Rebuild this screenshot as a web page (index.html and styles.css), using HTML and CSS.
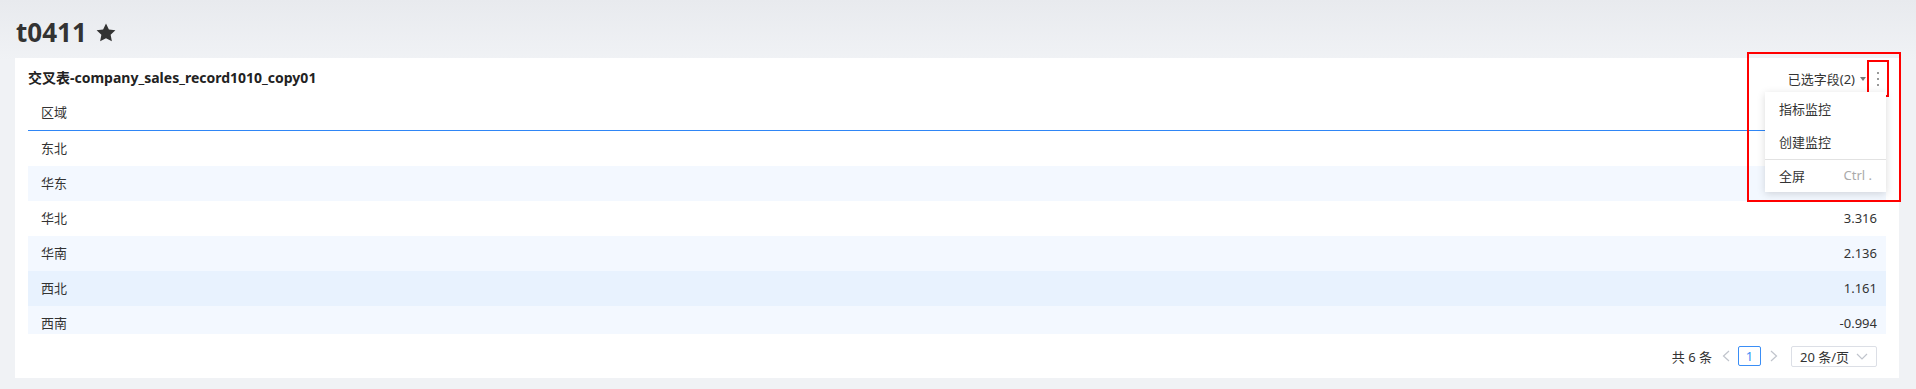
FILE: index.html
```html
<!DOCTYPE html>
<html lang="zh">
<head>
    <meta charset="UTF-8">
    <title>t0411</title>
    <meta name="viewport" content="width=device-width,initial-scale=1.0">
    <link rel="stylesheet" href="styles.css">
</head>
<body>
<div class="page">
    <h1 class="page-title">
        <span>t0411</span>
        <svg class="star" viewBox="0 0 24 23" width="20" height="19">
            <path d="M12 0.6l3.5 7.2 7.9 1-5.8 5.5 1.5 7.9L12 18.4l-7.1 3.8 1.5-7.9L0.6 8.8l7.9-1z" fill="#333"/>
        </svg>
    </h1>

    <div class="card">
        <div class="card-head">
            <div class="card-title">交叉表-company_sales_record1010_copy01</div>
            <div class="card-tools">
                <span class="fields">已选字段(2)<i class="caret"></i></span>
                <span class="more"><i></i><i></i><i></i></span>

                <!-- 更多操作菜单 -->
                <div class="menu">
                    <div class="menu-item">指标监控</div>
                    <div class="menu-item">创建监控</div>
                    <div class="menu-divider"></div>
                    <div class="menu-item menu-item--last">全屏<span class="menu-key">Ctrl .</span></div>
                </div>
                <div class="mark"></div>
            </div>
        </div>

        <div class="grid">
            <div class="grid-head">
                <span>区域</span>
            </div>
            <div class="grid-body">
                <!-- 前两行的数值被菜单遮住 -->
                <div class="grid-row"><span>东北</span></div>
                <div class="grid-row"><span>华东</span></div>
                <div class="grid-row"><span>华北</span><span>3.316</span></div>
                <div class="grid-row"><span>华南</span><span>2.136</span></div>
                <div class="grid-row grid-row--hover"><span>西北</span><span>1.161</span></div>
                <div class="grid-row"><span>西南</span><span>-0.994</span></div>
            </div>
        </div>

        <div class="pager">
            <span class="pager-total">共 6 条</span>
            <svg class="pager-arrow pager-prev" viewBox="0 0 8 12" width="8" height="12">
                <polyline points="7,1 1.5,6 7,11" fill="none" stroke="#c0c4cc" stroke-width="1.2"/>
            </svg>
            <span class="pager-num">1</span>
            <svg class="pager-arrow pager-next" viewBox="0 0 8 12" width="8" height="12">
                <polyline points="1,1 6.5,6 1,11" fill="none" stroke="#c0c4cc" stroke-width="1.2"/>
            </svg>
            <span class="pager-size">
                20 条/页
                <svg viewBox="0 0 12 7" width="12" height="7">
                    <polyline points="1,1 6,6 11,1" fill="none" stroke="#c0c4cc" stroke-width="1.2"/>
                </svg>
            </span>
        </div>
    </div>
</div>
</body>
</html>
```

FILE: styles.css
```css
html, body {
    margin: 0;
}

body {
    background: linear-gradient(#e8eaee, #f0f2f5 60px) #f0f2f5;
    font-family: "Noto Sans", "Noto Sans CJK SC", sans-serif;
    font-size: 13px;
    color: #333;
}

.page {
    padding: 0 17px 11px 15px;
}

/*页面标题*/
.page-title {
    margin: 0;
    padding: 14px 0 8px 1px;
    height: 36px;
    line-height: 36px;
    font-size: 26px;
    font-weight: 700;
    color: #333;
    display: flex;
    align-items: center;
    gap: 9px;
}

.star {
    display: block;
}

/*卡片*/
.card {
    background-color: #fff;
    height: 320px;
    box-sizing: border-box;
    padding: 0 13px;
    display: flex;
    flex-direction: column;
}

.card-head {
    height: 38px;
    flex: none;
    display: flex;
    justify-content: space-between;
    align-items: center;
}

.card-title {
    font-size: 14px;
    font-weight: 700;
    color: #222;
}

.card-tools {
    position: relative;
    display: flex;
    align-items: center;
    margin-right: -1px;
    margin-top: 3px;
}

.fields {
    display: flex;
    align-items: center;
    margin-top: -1px;
    color: #333;
}

.caret {
    width: 0;
    height: 0;
    border-left: 3.5px solid transparent;
    border-right: 3.5px solid transparent;
    border-top: 4px solid #777;
    margin: 1px 3px 0 5px;
}

.more {
    width: 18px;
    height: 33px;
    outline: 2px solid #f00;
    display: flex;
    flex-direction: column;
    align-items: center;
    justify-content: center;
    gap: 4px;
}

.more i {
    width: 2px;
    height: 2px;
    border-radius: 50%;
    background-color: #777;
}

/*下拉菜单*/
.menu {
    position: absolute;
    top: calc(100% - 3px);
    right: 1px;
    width: 121px;
    padding-top: 1px;
    background-color: #fff;
    box-shadow: 0 2px 8px rgba(0, 0, 0, .15);
    z-index: 2;
}

.menu-item {
    height: 33px;
    box-sizing: border-box;
    padding: 0 14px 2px;
    display: flex;
    align-items: center;
    justify-content: space-between;
    color: #333;
}

.menu-item--last {
    height: 32px;
}

.menu-key {
    color: #aaa;
}

.menu-divider {
    height: 1px;
    background-color: #e2e2e2;
}

/*标注框*/
.mark {
    position: absolute;
    right: -14px;
    top: -10px;
    width: 154px;
    height: 150px;
    box-sizing: border-box;
    border: 2px solid #f00;
    pointer-events: none;
    z-index: 3;
}

/*交叉表*/
.grid-head {
    height: 35px;
    box-sizing: border-box;
    border-bottom: 1px solid #2f86f6;
    display: flex;
    justify-content: space-between;
    align-items: center;
    padding: 0 15px 3px 13px;
}

.grid-body {
    height: 203px;
    overflow-y: auto;
}

.grid-body::-webkit-scrollbar {
    width: 6px;
}

.grid-body::-webkit-scrollbar-track {
    background-color: #ececec;
}

.grid-body::-webkit-scrollbar-thumb {
    background-color: #c1c1c1;
}

.grid-row {
    height: 35px;
    box-sizing: border-box;
    display: flex;
    justify-content: space-between;
    align-items: center;
    padding: 0 9px 2px 13px;
}

.grid-row:nth-child(even) {
    background-color: #f3f8ff;
}

.grid-row:last-child {
    margin-bottom: 8px;
}

.grid-row.grid-row--hover {
    background-color: #e8f2fe;
}

/*分页*/
.pager {
    flex: 1;
    display: flex;
    justify-content: flex-end;
    align-items: center;
    padding-right: 9px;
    color: #333;
}

.pager-total {
    margin-right: 10px;
}

.pager-prev {
    margin-right: 8px;
}

.pager-num {
    width: 23px;
    height: 20px;
    box-sizing: border-box;
    border: 1px solid #3a8ef6;
    border-radius: 2px;
    color: #3a8ef6;
    display: flex;
    align-items: center;
    justify-content: center;
}

.pager-next {
    margin: 0 13px 0 9px;
}

.pager-size {
    width: 86px;
    height: 21px;
    box-sizing: border-box;
    border: 1px solid #dcdfe6;
    border-radius: 2px;
    padding-left: 8px;
    display: flex;
    align-items: center;
    gap: 7px;
}
```
